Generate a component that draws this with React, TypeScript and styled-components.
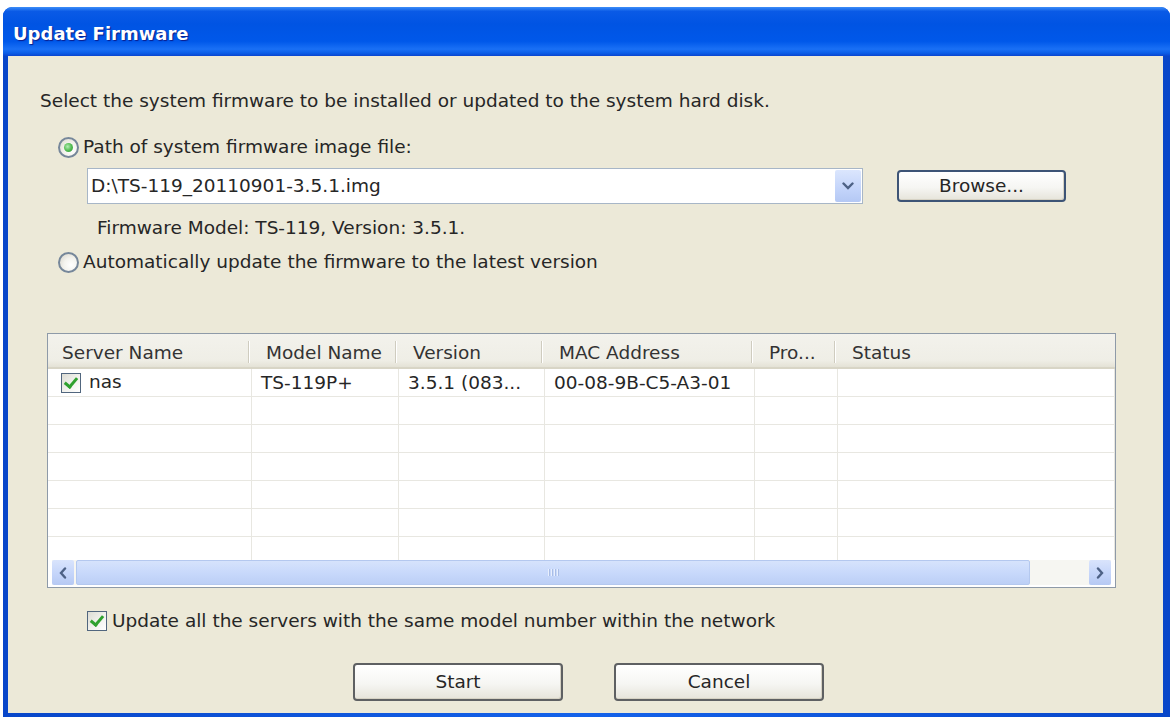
import React from 'react';
import styled, { createGlobalStyle } from 'styled-components';

const GlobalStyle = createGlobalStyle`
  html, body {
    margin: 0;
    padding: 0;
    background: #ffffff;
  }
  body {
    font-family: "DejaVu Sans", Verdana, sans-serif;
    font-size: 18.5px;
    color: #262626;
  }
`;

const COLUMNS = '204px 147px 146px 210px 83px 1fr';

const columns = [
  { key: 'server', title: 'Server Name' },
  { key: 'model', title: 'Model Name' },
  { key: 'version', title: 'Version' },
  { key: 'mac', title: 'MAC Address' },
  { key: 'progress', title: 'Pro...' },
  { key: 'status', title: 'Status' },
];

const servers = [
  {
    name: 'nas',
    checked: true,
    model: 'TS-119P+',
    version: '3.5.1 (083...',
    mac: '00-08-9B-C5-A3-01',
    progress: '',
    status: '',
  },
];

const EMPTY_ROWS = 6;

const App: React.FC = () => {
  return (
    <>
      <GlobalStyle />
      <Window>
        <TitleBar>Update Firmware</TitleBar>
        <Frame>
          <Content>
            <Intro>
              Select the system firmware to be installed or updated to the system hard disk.
            </Intro>

            <OptionRow $top={22}>
              <Radio $checked />
              Path of system firmware image file:
            </OptionRow>

            <FileRow>
              <Combo>
                <ComboText>D:\TS-119_20110901-3.5.1.img</ComboText>
                <ComboButton>
                  <svg width="12" height="8" viewBox="0 0 12 8">
                    <path
                      d="M1.5 1.5 L6 6 L10.5 1.5"
                      fill="none"
                      stroke="#4d6185"
                      strokeWidth="2.4"
                      strokeLinecap="round"
                    />
                  </svg>
                </ComboButton>
              </Combo>
              <PushButton $width={169} $height={32} $tone="blue">
                Browse...
              </PushButton>
            </FileRow>

            <Info>Firmware Model: TS-119, Version: 3.5.1.</Info>

            <OptionRow $top={10}>
              <Radio />
              Automatically update the firmware to the latest version
            </OptionRow>

            <ListView>
              <HeaderRow>
                {columns.map((c, i) => (
                  <HeaderCell key={c.key} $last={i === columns.length - 1}>
                    {c.title}
                  </HeaderCell>
                ))}
              </HeaderRow>

              <ListBody>
                {servers.map((s) => (
                  <BodyRow key={s.mac}>
                    <Cell $first>
                      <CheckBox $checked={s.checked} />
                      <CellName>{s.name}</CellName>
                    </Cell>
                    <Cell>{s.model}</Cell>
                    <Cell>{s.version}</Cell>
                    <Cell>{s.mac}</Cell>
                    <Cell>{s.progress}</Cell>
                    <Cell>{s.status}</Cell>
                  </BodyRow>
                ))}
                {Array.from({ length: EMPTY_ROWS }).map((_, r) => (
                  <BodyRow key={r}>
                    {columns.map((c) => (
                      <Cell key={c.key} />
                    ))}
                  </BodyRow>
                ))}
              </ListBody>

              <ScrollBar>
                <ScrollArrow>
                  <svg width="8" height="12" viewBox="0 0 8 12">
                    <path
                      d="M6 1.5 L2 6 L6 10.5"
                      fill="none"
                      stroke="#4d6185"
                      strokeWidth="2.4"
                      strokeLinecap="round"
                    />
                  </svg>
                </ScrollArrow>
                <ScrollThumb>
                  <Grip>
                    <i />
                    <i />
                    <i />
                    <i />
                  </Grip>
                </ScrollThumb>
                <ScrollTrack />
                <ScrollArrow>
                  <svg width="8" height="12" viewBox="0 0 8 12">
                    <path
                      d="M2 1.5 L6 6 L2 10.5"
                      fill="none"
                      stroke="#4d6185"
                      strokeWidth="2.4"
                      strokeLinecap="round"
                    />
                  </svg>
                </ScrollArrow>
              </ScrollBar>
            </ListView>

            <CheckRow>
              <CheckBox $checked />
              Update all the servers with the same model number within the network
            </CheckRow>

            <ButtonRow>
              <PushButton $width={210} $height={38}>
                Start
              </PushButton>
              <PushButton $width={210} $height={38}>
                Cancel
              </PushButton>
            </ButtonRow>
          </Content>
        </Frame>
      </Window>
    </>
  );
};

const Window = styled.div`
  margin: 7px 1px 0 3px;
  height: 710px;
  display: flex;
  flex-direction: column;
  border-radius: 9px 9px 0 0;
  overflow: hidden;
  background: #0b52dc;
`;

const TitleBar = styled.div`
  flex: none;
  height: 49px;
  box-sizing: border-box;
  padding: 4px 0 0 10px;
  display: flex;
  align-items: center;
  color: #ffffff;
  font-weight: bold;
  font-size: 18px;
  text-shadow: 1px 1px 1px #0a1c8a;
  background: linear-gradient(
    180deg,
    #3d8ef8 0%,
    #0a5ae6 9%,
    #0054e3 35%,
    #0058ea 70%,
    #1a70f5 86%,
    #0b5ee8 94%,
    #0a45cf 100%
  );
`;

const Frame = styled.div`
  flex: 1;
  display: flex;
  padding: 0 7px 4px 5px;
  background: linear-gradient(90deg, #0846c9 0%, #1462ea 50%, #0846c9 100%);
`;

const Content = styled.div`
  flex: 1;
  display: flex;
  flex-direction: column;
  align-items: flex-start;
  padding-left: 32px;
  background: #ece9d8;
  line-height: 24px;
`;

const Intro = styled.div`
  margin-top: 33px;
`;

const OptionRow = styled.label<{ $top: number }>`
  display: flex;
  align-items: center;
  gap: 4px;
  height: 24px;
  margin: ${(p) => p.$top}px 0 0 18px;
`;

const Radio = styled.span<{ $checked?: boolean }>`
  position: relative;
  flex: none;
  width: 21px;
  height: 21px;
  box-sizing: border-box;
  border-radius: 50%;
  border: 2px solid #76879a;
  background: radial-gradient(circle at 65% 65%, #ffffff 0%, #f4f3ee 45%, #d6d3c8 100%);

  &::after {
    content: '';
    display: ${(p) => (p.$checked ? 'block' : 'none')};
    position: absolute;
    left: 4px;
    top: 4px;
    width: 9px;
    height: 9px;
    border-radius: 50%;
    background: radial-gradient(circle at 40% 40%, #b4ecb4 0%, #55bd55 50%, #2e932e 100%);
  }
`;

const FileRow = styled.div`
  display: flex;
  align-items: center;
  gap: 34px;
  margin: 9px 0 0 47px;
`;

const Combo = styled.div`
  display: flex;
  width: 776px;
  height: 36px;
  box-sizing: border-box;
  border: 1px solid #a7b6c7;
  background: #ffffff;
`;

const ComboText = styled.div`
  flex: 1;
  padding-left: 3px;
  line-height: 34px;
`;

const ComboButton = styled.div`
  width: 26px;
  margin: 1px;
  display: flex;
  align-items: center;
  justify-content: center;
  border-radius: 2px;
  background: linear-gradient(180deg, #dbe6fd 0%, #c3d4fa 60%, #b4c8f4 100%);
`;

const PushButton = styled.div<{ $width: number; $height: number; $tone?: 'blue' }>`
  width: ${(p) => p.$width}px;
  height: ${(p) => p.$height}px;
  box-sizing: border-box;
  display: flex;
  align-items: center;
  justify-content: center;
  border: 2px solid ${(p) => (p.$tone === 'blue' ? '#3d5476' : '#5e6062')};
  border-radius: 4px;
  background: linear-gradient(180deg, #ffffff 0%, #f6f6f3 55%, #e6e4da 100%);
  box-shadow: inset -1px -1px 0 #d6d2c4;
  color: #262626;
`;

const Info = styled.div`
  margin: 12px 0 0 57px;
`;

const ListView = styled.div`
  margin: 59px 0 0 7px;
  width: 1069px;
  height: 255px;
  box-sizing: border-box;
  border: 1px solid #8e9aa8;
  background: #ffffff;
  display: flex;
  flex-direction: column;
  overflow: hidden;
`;

const HeaderRow = styled.div`
  flex: none;
  display: grid;
  grid-template-columns: ${COLUMNS};
  height: 35px;
  box-sizing: border-box;
  background: linear-gradient(180deg, #f3f2ec 0%, #efeee6 80%, #e4e2d6 100%);
  border-bottom: 2px solid #d8d5c6;
  color: #333333;
`;

const HeaderCell = styled.div<{ $last?: boolean }>`
  position: relative;
  display: flex;
  align-items: center;
  padding: 4px 0 0 14px;
  white-space: nowrap;

  &::after {
    content: '';
    display: ${(p) => (p.$last ? 'none' : 'block')};
    position: absolute;
    right: 3px;
    top: 7px;
    bottom: 4px;
    width: 1px;
    background: #cfccbf;
    box-shadow: 1px 0 0 #ffffff;
  }
`;

const ListBody = styled.div`
  flex: 1;
  overflow: hidden;
`;

const BodyRow = styled.div`
  display: grid;
  grid-template-columns: ${COLUMNS};
  height: 28px;
`;

const Cell = styled.div<{ $first?: boolean }>`
  display: flex;
  align-items: center;
  gap: 8px;
  padding-left: ${(p) => (p.$first ? 13 : 9)}px;
  border-right: 1px solid #e8e7e1;
  border-bottom: 1px solid #e8e7e1;
  white-space: nowrap;
  overflow: hidden;
`;

const CellName = styled.span`
  margin-top: -2px;
`;

const CheckBox = styled.span<{ $checked?: boolean }>`
  position: relative;
  flex: none;
  width: 20px;
  height: 20px;
  box-sizing: border-box;
  border: 1.5px solid #51667e;
  background: linear-gradient(135deg, #dcdcd4 0%, #f2f2ee 55%, #ffffff 100%);

  &::after {
    content: '';
    display: ${(p) => (p.$checked ? 'block' : 'none')};
    position: absolute;
    left: 5px;
    top: 1px;
    width: 5px;
    height: 10px;
    border: solid #2fa12f;
    border-width: 0 3px 3px 0;
    transform: rotate(40deg);
  }
`;

const ScrollBar = styled.div`
  flex: none;
  display: flex;
  align-items: stretch;
  height: 25px;
  margin: 0 4px 2px 4px;
  background: #f7f6f1;
`;

const ScrollArrow = styled.div`
  flex: none;
  width: 22px;
  display: flex;
  align-items: center;
  justify-content: center;
  border-radius: 2px;
  background: linear-gradient(180deg, #d9e4fc 0%, #c5d5fa 55%, #b6c9f3 100%);
`;

const ScrollThumb = styled.div`
  width: 954px;
  margin-left: 2px;
  display: flex;
  align-items: center;
  justify-content: center;
  box-sizing: border-box;
  border: 1px solid #b4c8ef;
  border-radius: 2px;
  background: linear-gradient(180deg, #d6e3fc 0%, #c7d8fb 55%, #bccff6 100%);
`;

const Grip = styled.div`
  display: flex;
  gap: 2px;

  i {
    display: block;
    width: 1px;
    height: 7px;
    background: #e8effd;
    box-shadow: 1px 0 0 #a9bde6;
  }
`;

const ScrollTrack = styled.div`
  flex: 1;
  background: #f6f6f2;
`;

const CheckRow = styled.label`
  display: flex;
  align-items: center;
  gap: 5px;
  height: 24px;
  margin: 21px 0 0 47px;
`;

const ButtonRow = styled.div`
  display: flex;
  gap: 51px;
  margin: 30px 0 0 313px;
`;

export default App;
